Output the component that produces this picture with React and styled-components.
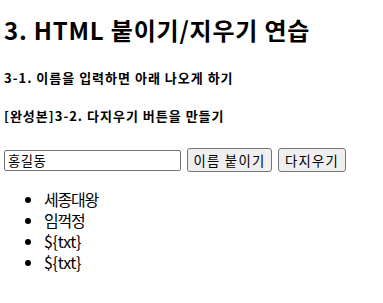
import React from "react";
import styled, { createGlobalStyle } from "styled-components";

const Global = createGlobalStyle`
  html, body { margin: 0; padding: 0; background: #fff; }
  body { font-family: "Noto Sans CJK KR", "Noto Sans", sans-serif; color: #000; }
`;

const Page = styled.div`
  padding: 14px 4px 0 4px;
`;

const Title = styled.h2`
  margin: 0;
  font-size: 24px;
  line-height: 32px;
  font-weight: 700;
  letter-spacing: 0.8px;
  white-space: nowrap;
`;

const Sub = styled.h5`
  margin: ${(p) => p.$top}px 0 0 0;
  font-size: 13px;
  line-height: 18px;
  font-weight: 700;
  letter-spacing: 1px;
  white-space: nowrap;
`;

const Row = styled.div`
  display: flex;
  align-items: center;
  gap: 6px;
  margin-top: 23px;
`;

const Input = styled.input`
  box-sizing: border-box;
  width: 177px;
  height: 21px;
  padding: 0 3px;
  border: 1px solid #767676;
  border-radius: 2px;
  font-family: "Noto Sans CJK KR", sans-serif;
  font-size: 13.33px;
  letter-spacing: 0.5px;
  color: #000;
  outline: none;
`;

const Button = styled.button`
  box-sizing: border-box;
  height: 24px;
  width: ${(p) => p.$w}px;
  padding: 0;
  border: 1px solid #767676;
  border-radius: 3px;
  background: #efefef;
  font-family: "Noto Sans CJK KR", sans-serif;
  font-size: 13.33px;
  letter-spacing: 1.3px;
  color: #000;
  white-space: nowrap;
  text-align: center;
`;

const List = styled.ul`
  margin: 17px 0 0 0;
  padding-left: 40px;
  list-style: disc;
`;

const Item = styled.li`
  font-size: 16px;
  line-height: 21px;
  letter-spacing: ${(p) => (p.$hangul ? "-1.2px" : "-0.3px")};
`;

export default function App() {
  const names = ["세종대왕", "임꺽정", "${txt}", "${txt}"];
  return (
    <Page>
      <Global />
      <Title>3. HTML 붙이기/지우기 연습</Title>
      <Sub $top={23}>3-1. 이름을 입력하면 아래 나오게 하기</Sub>
      <Sub $top={20}>[완성본]3-2. 다지우기 버튼을 만들기</Sub>
      <Row>
        <Input defaultValue="홍길동" />
        <Button $w={85}>이름 붙이기</Button>
        <Button $w={68}>다지우기</Button>
      </Row>
      <List>
        {names.map((n, i) => (
          <Item key={i} $hangul={!n.startsWith("$")}>
            {n}
          </Item>
        ))}
      </List>
    </Page>
  );
}
